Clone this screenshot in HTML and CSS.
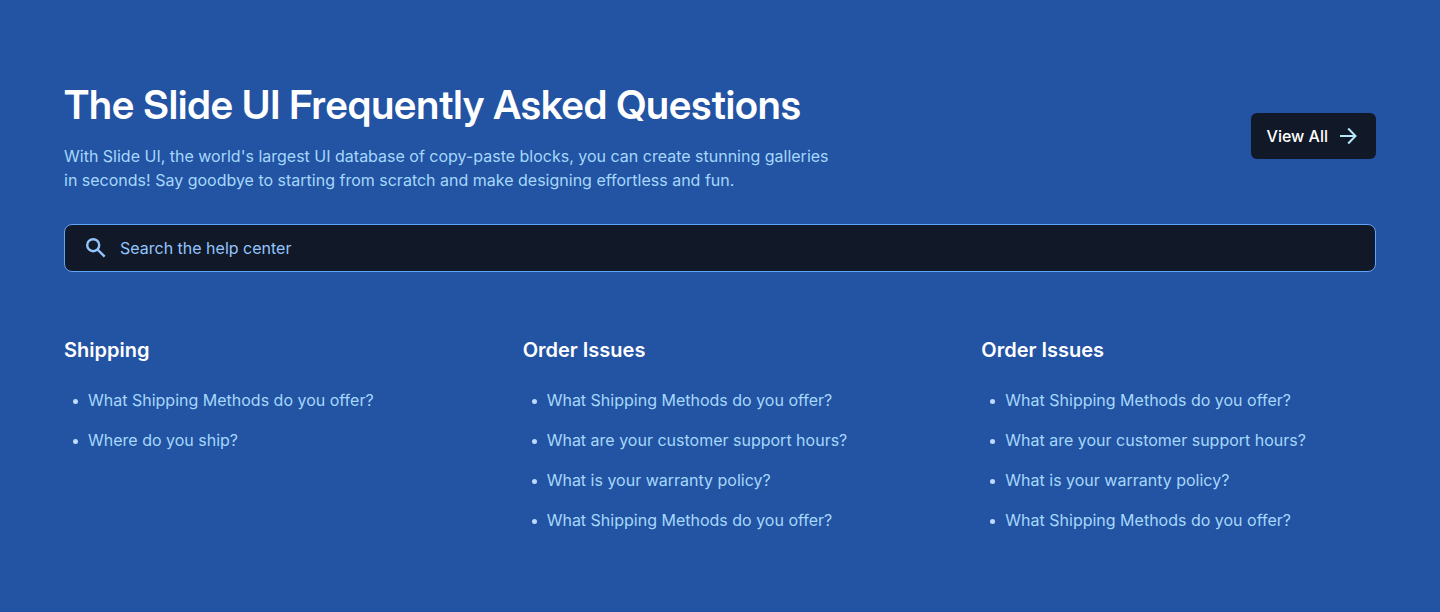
FILE: index.html
```html
<!DOCTYPE html>
<html lang="en">
<head>
<meta charset="utf-8">
<title>Slide UI FAQ</title>
<link rel="stylesheet" href="styles.css">
</head>
<body>
<main class="faq">
  <header class="faq-header">
    <div class="intro">
      <h1>The Slide UI Frequently Asked Questions</h1>
      <p>With Slide UI, the world's largest UI database of copy-paste blocks, you can create stunning galleries in seconds! Say goodbye to starting from scratch and make designing effortless and fun.</p>
    </div>
    <button class="view-all" type="button">View All
      <svg class="arrow" viewBox="0 0 24 24" aria-hidden="true"><path d="M4 12h15M12.200 4.500l7.300 7.500-7.300 7.500"/></svg>
    </button>
  </header>
  <form class="search" role="search">
    <label class="search-icon" for="q" aria-label="Search the help center">
      <svg viewBox="0 0 24 24" aria-hidden="true"><circle cx="9.200" cy="9.200" r="6"/><path d="M13.500 13.500L20.700 20.700"/></svg>
    </label>
    <input id="q" type="search" placeholder="Search the help center">
  </form>
  <div class="topics">
    <section>
      <h2>Shipping</h2>
      <ul>
        <li><a href="#">What Shipping Methods do you offer?</a></li>
        <li><a href="#">Where do you ship?</a></li>
      </ul>
    </section>
    <section>
      <h2>Order Issues</h2>
      <ul>
        <li><a href="#">What Shipping Methods do you offer?</a></li>
        <li><a href="#">What are your customer support hours?</a></li>
        <li><a href="#">What is your warranty policy?</a></li>
        <li><a href="#">What Shipping Methods do you offer?</a></li>
      </ul>
    </section>
    <section>
      <h2>Order Issues</h2>
      <ul>
        <li><a href="#">What Shipping Methods do you offer?</a></li>
        <li><a href="#">What are your customer support hours?</a></li>
        <li><a href="#">What is your warranty policy?</a></li>
        <li><a href="#">What Shipping Methods do you offer?</a></li>
      </ul>
    </section>
  </div>
</main>
</body>
</html>
```
FILE: styles.css
```css
* { box-sizing: border-box; margin: 0; padding: 0; }
html { background: #2353a3; }
body { font-family: Inter, "Liberation Sans", sans-serif; font-size: 16px; line-height: 24px; color: #bfdbfe; }
.faq { padding: 80px 64px; }
.faq-header { display: flex; align-items: center; justify-content: space-between; gap: 32px; margin-bottom: 32px; }
.intro { max-width: 768px; }
h1 { font-family: "Inter Display", Inter, sans-serif; font-size: 40px; line-height: 50px; font-weight: 600; color: #fff; margin-bottom: 14px; }
.intro p { color: #a5d8fc; }
.view-all { display: flex; align-items: center; gap: 8px; padding: 11px 16px; border: 0; border-radius: 6px; background: #111827; color: #fff; font: 500 16px/24px Inter, sans-serif; white-space: nowrap; }
.arrow { width: 24px; height: 24px; fill: none; stroke: #bae6fd; stroke-width: 2; }
.search { display: flex; align-items: center; height: 48px; padding: 0 19px; gap: 12px; border: 1px solid #60a5fa; border-radius: 8px; background: #111827; margin-bottom: 64px; }
.search-icon { display: flex; }
.search-icon svg { width: 24px; height: 24px; fill: none; stroke: #93c5fd; stroke-width: 2.4; }
.search input { flex: 1; min-width: 0; border: 0; outline: 0; background: transparent; color: #fff; font: 400 16px/24px Inter, sans-serif; }
.search input::placeholder { color: #93c5fd; opacity: 1; }
.topics { display: grid; grid-template-columns: repeat(3, 1fr); gap: 64px; }
h2 { font-size: 20px; line-height: 28px; font-weight: 600; color: #fff; margin-bottom: 24px; }
ul { display: grid; gap: 16px; padding-left: 9px; list-style: none; }
li { display: flex; align-items: center; gap: 10px; }
li::before { content: ""; width: 5px; height: 5px; margin-top: 2px; border-radius: 50%; background: #bfdbfe; }
a { color: #a5d8fc; text-decoration: none; }
```
